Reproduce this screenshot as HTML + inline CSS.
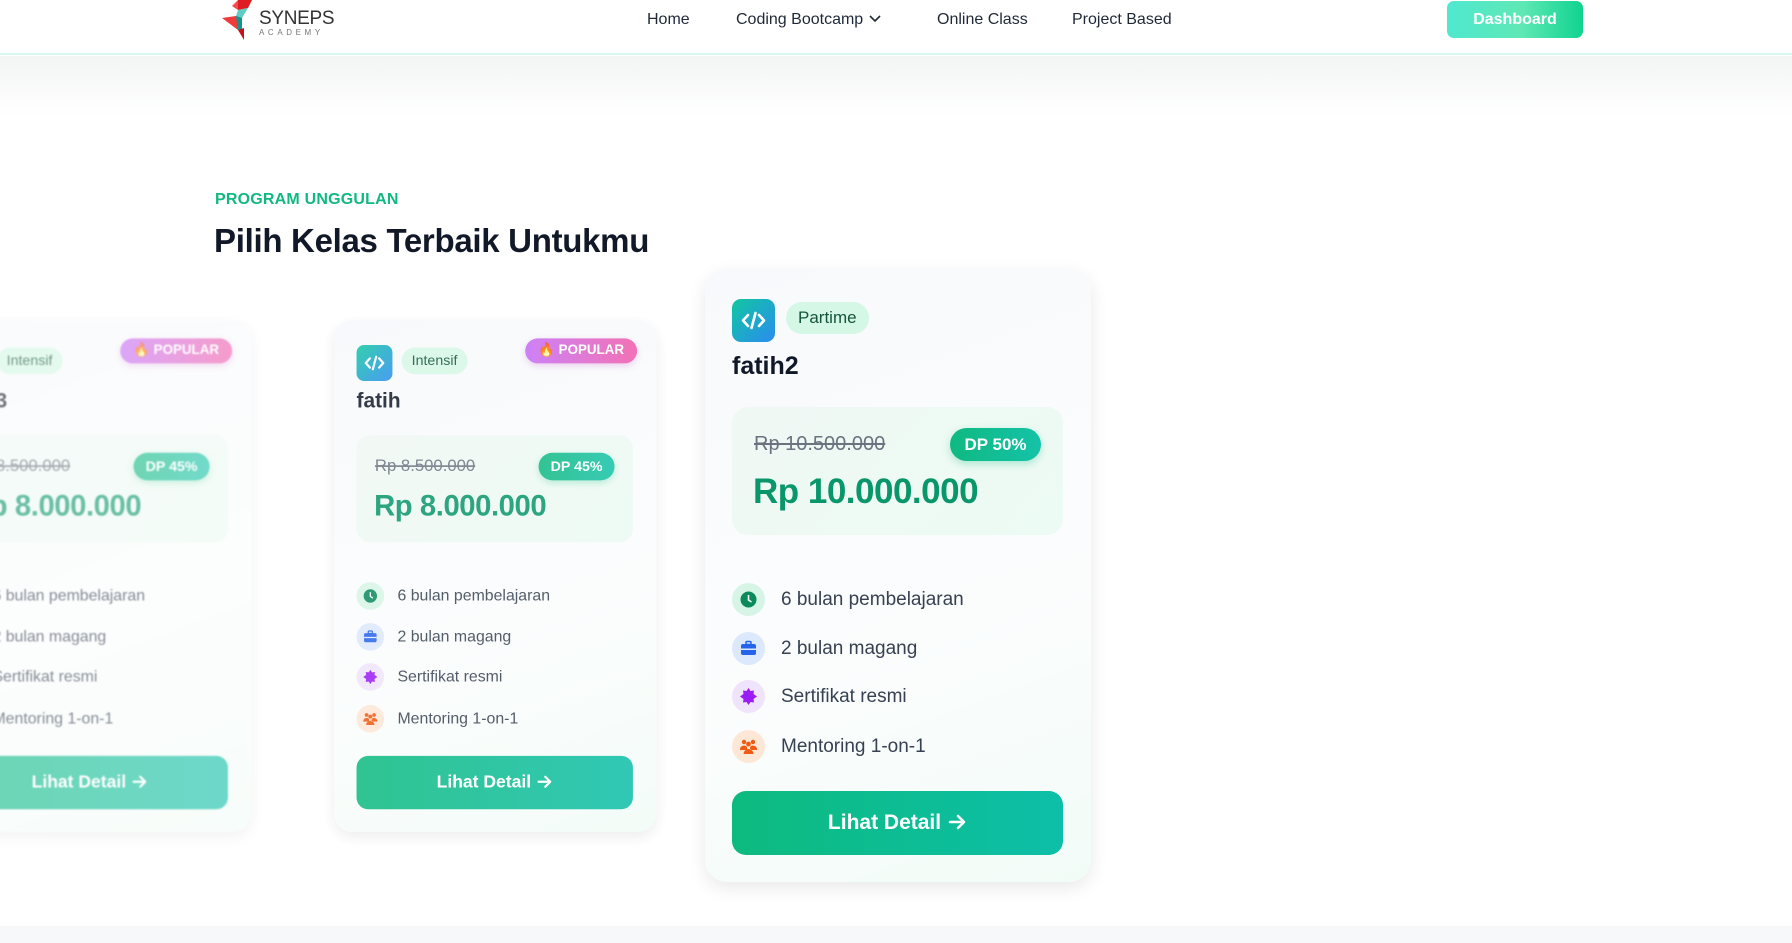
<!DOCTYPE html>
<html><head><meta charset="utf-8"><style>
*{box-sizing:border-box;margin:0;padding:0}
body{width:1792px;height:943px;overflow:hidden;background:#fff;font-family:"Liberation Sans",sans-serif;position:relative;color:#1f2937}
.nav{position:absolute;left:0;top:0;width:1792px;height:55px;background:#fff;border-bottom:2px solid #d9f7ec;z-index:5}
.nav a{position:absolute;top:11px;font-size:16px;color:#1f2937;text-decoration:none}
.dash{position:absolute;left:1447px;top:1px;width:136px;height:37px;border-radius:7px;background:linear-gradient(90deg,#4fe8d0,#5fe8b5 55%,#10d38f);color:#fff;font-weight:bold;font-size:16px;text-align:center;line-height:37px}
.shade{position:absolute;left:0;top:56px;width:1792px;height:60px;background:linear-gradient(#f3f4f4,#fff)}
.bottom{position:absolute;left:0;top:926px;width:1792px;height:17px;background:#f7f8f9}
.eyebrow{position:absolute;left:215px;top:191px;font-size:16px;color:#10b981;font-weight:bold;letter-spacing:.2px}
h1{position:absolute;left:214px;top:222px;font-size:33px;font-weight:bold;color:#111827;letter-spacing:-.3px}
.card{position:absolute;width:386px;height:613px;border-radius:22px;background:linear-gradient(160deg,#f7f9fc,#fbfdfd 60%,#f2fcf7);box-shadow:0 6px 18px rgba(0,0,0,.09);transform-origin:0 0}
.ic{position:absolute;left:27px;top:30px;width:43px;height:43px;border-radius:9px;background:linear-gradient(135deg,#10c7a0,#2a8cf0)}
.pill{position:absolute;left:81px;top:33px;height:32px;padding:0 12px;border-radius:16px;background:#d5f7e5;color:#14553c;font-size:17px;line-height:32px}
.title{position:absolute;left:27px;top:83px;font-size:25px;font-weight:bold;color:#111827}
.pb{position:absolute;left:27px;top:138px;width:331px;height:128px;border-radius:16px;background:linear-gradient(135deg,#f0f8f4,#ecfbf3)}
.old{position:absolute;left:22px;top:26px;font-size:20px;color:#6b7280;text-decoration:line-through}
.dp{position:absolute;left:218px;top:21px;width:91px;height:33px;border-radius:17px;background:linear-gradient(90deg,#10b981,#14c2a8);color:#fff;font-weight:bold;font-size:17px;text-align:center;line-height:33px;box-shadow:0 3px 8px rgba(16,185,129,.3)}
.big{position:absolute;left:21px;top:65px;font-size:35px;font-weight:bold;color:#08966a;letter-spacing:-.5px}
.f{position:absolute;left:27px;height:33px;font-size:19px;color:#374151;line-height:33px;padding-left:49px}
.f i{position:absolute;left:0;top:0;width:33px;height:33px;border-radius:50%}
.f svg{position:absolute;left:8px;top:8px}
.btn{position:absolute;left:27px;top:522px;width:331px;height:64px;border-radius:14px;background:linear-gradient(90deg,#0dba7e,#0dbfa8);color:#fff;font-weight:bold;font-size:21px;text-align:center;line-height:64px}
.btn svg{vertical-align:-3px;margin-left:6px}
.pop{position:absolute;left:229px;top:22px;width:134px;height:30px;border-radius:15px;background:linear-gradient(90deg,#c46cf5,#f05aa8);color:#fff;font-weight:bold;font-size:16px;line-height:30px;text-align:center;box-shadow:0 3px 8px rgba(200,90,200,.3)}
</style></head><body>
<div class="nav">
 <svg style="position:absolute;left:222px;top:0" width="40" height="40" viewBox="0 0 40 40"><polygon points="16,0 30,0 26,8 16,10" fill="#e01b22"/><polygon points="16,10 26,8 20,18 14,16" fill="#5fcdc4"/><polygon points="0,18 14,16 20,18 16,30" fill="#f13b3b"/><polygon points="14,16 20,18 20,30 16,30" fill="#10968f"/><polygon points="16,30 22,28 22,40" fill="#c8101a"/><polygon points="16,0 16,10 10,6" fill="#f24d4d"/></svg>
 <div style="position:absolute;left:259px;top:8px;font-size:19px;color:#333;letter-spacing:-.3px">SYNEPS</div>
 <div style="position:absolute;left:259px;top:28px;font-size:8px;color:#777;letter-spacing:3.6px">ACADEMY</div>
 <a style="left:647px">Home</a>
 <a style="left:736px">Coding Bootcamp <svg width="14" height="10" viewBox="0 0 14 10"><path d="M2 2l5 5 5-5" stroke="#1f2937" stroke-width="1.6" fill="none"/></svg></a>
 <a style="left:937px">Online Class</a>
 <a style="left:1072px">Project Based</a>
 <div class="dash">Dashboard</div>
</div>
<div class="shade"></div>
<div class="eyebrow">PROGRAM UNGGULAN</div>
<h1>Pilih Kelas Terbaik Untukmu</h1>

<div class="card" style="left:-71px;top:320px;transform:scale(.835);opacity:.6;filter:blur(1px)">
 <div class="ic"></div><div class="pill">Intensif</div><div class="pop">🔥 POPULAR</div>
 <div class="title">fatih3</div>
 <div class="pb"><div class="old">Rp 8.500.000</div><div class="dp">DP 45%</div><div class="big">Rp 8.000.000</div></div>
 <div class="f" style="top:314px"><i style="background:#d6f5e6"></i>6 bulan pembelajaran</div>
 <div class="f" style="top:363px"><i style="background:#dce8fc"></i>2 bulan magang</div>
 <div class="f" style="top:411px"><i style="background:#f0e4fc"></i>Sertifikat resmi</div>
 <div class="f" style="top:461px"><i style="background:#fde7d6"></i>Mentoring 1-on-1</div>
 <div class="btn">Lihat Detail<svg width="20" height="20" viewBox="0 0 20 20"><path d="M3 10h13M11 4l6 6-6 6" stroke="#fff" stroke-width="2.6" fill="none" stroke-linecap="round" stroke-linejoin="round"/></svg></div>
</div>

<div class="card" style="left:334px;top:320px;transform:scale(.835);opacity:.85">
 <div class="ic"><svg width="43" height="43" viewBox="0 0 43 43"><path d="M16 16l-5 5.5 5 5.5M27 16l5 5.5-5 5.5M23.5 14l-4 15" stroke="#fff" stroke-width="2.6" fill="none" stroke-linecap="round" stroke-linejoin="round"/></svg></div><div class="pill">Intensif</div><div class="pop">🔥 POPULAR</div>
 <div class="title">fatih</div>
 <div class="pb"><div class="old">Rp 8.500.000</div><div class="dp">DP 45%</div><div class="big">Rp 8.000.000</div></div>
 <div class="f" style="top:314px"><i style="background:#d6f5e6"><svg width="17" height="17" viewBox="0 0 17 17"><circle cx="8.5" cy="8.5" r="8" fill="#0b8a5c"/><path d="M8.5 4v5l3 2" stroke="#fff" stroke-width="1.6" fill="none"/></svg></i>6 bulan pembelajaran</div>
 <div class="f" style="top:363px"><i style="background:#dce8fc"><svg width="17" height="17" viewBox="0 0 17 17"><rect x="1" y="4" width="15" height="11" rx="2" fill="#2563eb"/><rect x="6" y="1.5" width="5" height="3" rx="1" fill="none" stroke="#2563eb" stroke-width="1.5"/><rect x="1" y="8.5" width="15" height="1.5" fill="#dce8fc"/></svg></i>2 bulan magang</div>
 <div class="f" style="top:411px"><i style="background:#f0e4fc"><svg width="17" height="17" viewBox="0 0 17 17"><polygon points="8.5,0 10.5,3 14,2.5 13.5,6 17,8.5 13.5,11 14,14.5 10.5,14 8.5,17 6.5,14 3,14.5 3.5,11 0,8.5 3.5,6 3,2.5 6.5,3" fill="#9b1cf5"/></svg></i>Sertifikat resmi</div>
 <div class="f" style="top:461px"><i style="background:#fde7d6"><svg width="17" height="17" viewBox="0 0 17 17" fill="#f05a12"><circle cx="4" cy="4" r="2.2"/><circle cx="13" cy="4" r="2.2"/><circle cx="8.5" cy="6" r="2.4"/><path d="M0 11a4 4 0 0 1 7 -2v3H0zM17 11a4 4 0 0 0 -7 -2v3h7zM3.5 16a5 5 0 0 1 10 0z"/></svg></i>Mentoring 1-on-1</div>
 <div class="btn">Lihat Detail<svg width="20" height="20" viewBox="0 0 20 20"><path d="M3 10h13M11 4l6 6-6 6" stroke="#fff" stroke-width="2.6" fill="none" stroke-linecap="round" stroke-linejoin="round"/></svg></div>
</div>

<div class="card" style="left:705px;top:269px">
 <div class="ic"><svg width="43" height="43" viewBox="0 0 43 43"><path d="M16 16l-5 5.5 5 5.5M27 16l5 5.5-5 5.5M23.5 14l-4 15" stroke="#fff" stroke-width="2.6" fill="none" stroke-linecap="round" stroke-linejoin="round"/></svg></div><div class="pill">Partime</div>
 <div class="title">fatih2</div>
 <div class="pb"><div class="old">Rp 10.500.000</div><div class="dp">DP 50%</div><div class="big">Rp 10.000.000</div></div>
 <div class="f" style="top:314px"><i style="background:#d6f5e6"><svg width="17" height="17" viewBox="0 0 17 17"><circle cx="8.5" cy="8.5" r="8" fill="#0b8a5c"/><path d="M8.5 4v5l3 2" stroke="#fff" stroke-width="1.6" fill="none"/></svg></i>6 bulan pembelajaran</div>
 <div class="f" style="top:363px"><i style="background:#dce8fc"><svg width="17" height="17" viewBox="0 0 17 17"><rect x="1" y="4" width="15" height="11" rx="2" fill="#2563eb"/><rect x="6" y="1.5" width="5" height="3" rx="1" fill="none" stroke="#2563eb" stroke-width="1.5"/><rect x="1" y="8.5" width="15" height="1.5" fill="#dce8fc"/></svg></i>2 bulan magang</div>
 <div class="f" style="top:411px"><i style="background:#f0e4fc"><svg width="17" height="17" viewBox="0 0 17 17"><polygon points="8.5,0 10.5,3 14,2.5 13.5,6 17,8.5 13.5,11 14,14.5 10.5,14 8.5,17 6.5,14 3,14.5 3.5,11 0,8.5 3.5,6 3,2.5 6.5,3" fill="#9b1cf5"/></svg></i>Sertifikat resmi</div>
 <div class="f" style="top:461px"><i style="background:#fde7d6"><svg width="17" height="17" viewBox="0 0 17 17" fill="#f05a12"><circle cx="4" cy="4" r="2.2"/><circle cx="13" cy="4" r="2.2"/><circle cx="8.5" cy="6" r="2.4"/><path d="M0 11a4 4 0 0 1 7 -2v3H0zM17 11a4 4 0 0 0 -7 -2v3h7zM3.5 16a5 5 0 0 1 10 0z"/></svg></i>Mentoring 1-on-1</div>
 <div class="btn">Lihat Detail<svg width="20" height="20" viewBox="0 0 20 20"><path d="M3 10h13M11 4l6 6-6 6" stroke="#fff" stroke-width="2.6" fill="none" stroke-linecap="round" stroke-linejoin="round"/></svg></div>
</div>
<div class="bottom"></div>
</body></html>
